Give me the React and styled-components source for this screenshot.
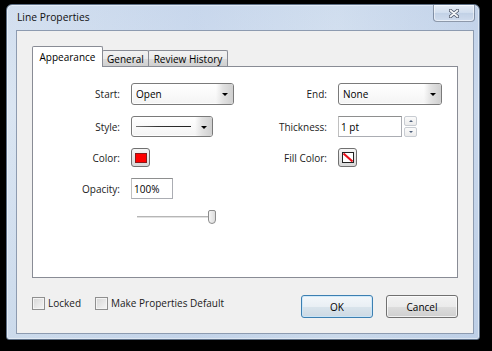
import React from 'react'
import styled, { createGlobalStyle } from 'styled-components'

const GlobalStyle = createGlobalStyle`
  html, body {
    margin: 0;
    padding: 0;
    background: #000;
  }
  body {
    font-family: "Open Sans", "Noto Sans", sans-serif;
    font-size: 10px;
    color: #1b1b1b;
  }
  * { box-sizing: border-box; }
`

const Screen = styled.div`
  width: 492px;
  height: 351px;
  background: #000;
  padding: 4px 0 0 6px;
`

const Window = styled.div`
  width: 474px;
  height: 336px;
  display: flex;
  flex-direction: column;
  border: 1px solid #5d6f86;
  border-radius: 6px 6px 3px 3px;
  background:
    linear-gradient(90deg, rgba(255,255,255,.15), rgba(190,205,235,.2) 40%, rgba(255,255,255,.1) 70%, rgba(170,190,225,.25)),
    linear-gradient(180deg, #cad9ec 0%, #d4e1f0 30%, #c3d4e8 100%);
  box-shadow: inset 0 0 0 1px rgba(255,255,255,.45);
`

const TitleBar = styled.div`
  height: 25px;
  display: flex;
  align-items: flex-start;
  padding: 0 4px 0 10px;
`

const Title = styled.span`
  margin-top: 5px;
  line-height: 14px;
  font-size: 10.3px;
  color: #101010;
`

const CloseButton = styled.div`
  margin-left: auto;
  width: 42px;
  height: 17px;
  display: flex;
  align-items: center;
  justify-content: center;
  border: 1px solid rgba(70, 84, 108, .55);
  border-top: none;
  border-radius: 0 0 4px 4px;
  background: linear-gradient(180deg, rgba(255,255,255,.55), rgba(220,230,242,.5) 50%, rgba(190,205,225,.5) 51%, rgba(215,225,240,.6));
  box-shadow: inset 0 0 0 1px rgba(255,255,255,.5);
`

const Client = styled.div`
  flex: 1;
  margin: 0 5px 5px 9px;
  display: flex;
  flex-direction: column;
  padding: 15px 15px 0 15px;
  background: #f0f0f0;
  border: 1px solid #8d9bb0;
`

const TabStrip = styled.div`
  height: 20px;
  display: flex;
  align-items: flex-end;
`

const Tab = styled.div`
  position: relative;
  width: ${p => p.$w}px;
  height: ${p => (p.$active ? 21 : 16)}px;
  margin-bottom: ${p => (p.$active ? -1 : 0)}px;
  margin-right: -1px;
  z-index: ${p => (p.$active ? 2 : 1)};
  display: flex;
  align-items: center;
  justify-content: center;
  border: 1px solid #898c95;
  border-bottom: none;
  border-radius: 2px 2px 0 0;
  background: ${p => (p.$active ? '#fff' : 'linear-gradient(180deg, #f2f2f2 0%, #ebebeb 50%, #dddddd 51%, #cfcfcf 100%)')};
  color: #000;
  white-space: nowrap;
`

const Panel = styled.div`
  height: 212px;
  background: #fff;
  border: 1px solid #898c95;
  padding-top: 16px;
  display: grid;
  grid-template-columns: 87px 105px 80px 1fr;
  grid-template-rows: 22px 21px 19px 21px 14px;
  column-gap: 11px;
  row-gap: 11px;
`

const Label = styled.label`
  justify-self: end;
  align-self: center;
  white-space: nowrap;
`

const Cell = styled.div`
  display: flex;
  align-items: center;
  gap: 2px;
`

const Combo = styled.div`
  width: ${p => p.$w}px;
  height: 100%;
  display: flex;
  align-items: stretch;
  border: 1px solid #7a7a7a;
  border-radius: 3px;
  background: linear-gradient(180deg, #ffffff, #f4f4f4);
  overflow: hidden;
  box-shadow: inset 0 0 0 1px rgba(255,255,255,.8);
`

const ComboValue = styled.div`
  flex: 1;
  display: flex;
  align-items: center;
  padding-left: 4px;
  color: #000;
`

const LineSample = styled.div`
  flex: 1;
  height: 1px;
  margin-right: 4px;
  background: linear-gradient(90deg, #777 0%, #333 40%, #222 100%);
`

const ComboArrow = styled.div`
  width: 17px;
  display: flex;
  align-items: center;
  justify-content: center;
  background: linear-gradient(90deg, rgba(255,255,255,0) 0%, #e2e2e2 40%, #cfcfcf 100%);

  &::after {
    content: '';
    border-left: 3px solid transparent;
    border-right: 3px solid transparent;
    border-top: 3px solid #000;
    margin-top: 1px;
  }
`

const TextBox = styled.div`
  width: ${p => p.$w}px;
  height: 100%;
  display: flex;
  align-items: center;
  padding-left: 2px;
  background: #fff;
  border: 1px solid #abadb3;
  border-top-color: #8e8f8f;
  border-left-color: #c0c0c0;
  color: #000;
`

const Spinner = styled.div`
  width: 13px;
  height: 100%;
  display: flex;
  flex-direction: column;
  gap: 1px;
`

const SpinButton = styled.div`
  flex: 1;
  display: flex;
  align-items: center;
  justify-content: center;
  border: 1px solid #c8ccd2;
  border-radius: 2px;
  background: linear-gradient(180deg, #fbfbfb, #ececec);

  &::after {
    content: '';
    border-left: 2px solid transparent;
    border-right: 2px solid transparent;
    ${p => (p.$down ? 'border-top: 2px solid #4f607c;' : 'border-bottom: 2px solid #4f607c;')}
  }
`

const Swatch = styled.div`
  width: 19px;
  height: 19px;
  display: flex;
  align-items: center;
  justify-content: center;
  border: 1px solid #707070;
  border-radius: 3px;
  background: linear-gradient(180deg, #f6f6f6 0%, #e6e6e6 50%, #d8d8d8 100%);
`

const Chip = styled.div`
  width: 12px;
  height: 10px;
  background: ${p => p.$color};
  border: 1px solid #8a1a1a;
`

const Slider = styled.div`
  grid-column: 2;
  position: relative;
  width: 79px;
  margin-left: 6px;
  display: flex;
  align-items: center;
`

const Track = styled.div`
  width: 75px;
  height: 2px;
  background: #e1e1e1;
  border-top: 1px solid #b6b6b6;
`

const Thumb = styled.div`
  position: absolute;
  right: 0;
  top: 0;
  width: 8px;
  height: 14px;
  border: 1px solid #8c8c8c;
  border-radius: 2px 2px 4px 4px;
  background: linear-gradient(90deg, #f4f4f4, #dcdcdc);
`

const Footer = styled.div`
  flex: 1;
  display: flex;
  align-items: flex-start;
  padding-top: 17px;
`

const Check = styled.div`
  display: flex;
  align-items: center;
  gap: 3px;
  margin-top: 2px;
  margin-right: 14px;
  line-height: 11px;
  white-space: nowrap;

  &::before {
    content: '';
    width: 11px;
    height: 11px;
    border: 1px solid #8f8f8f;
    background: linear-gradient(135deg, #d6d6d6, #f5f5f5);
    box-shadow: inset 0 0 0 1px #f4f4f4;
  }
`

const Buttons = styled.div`
  margin-left: auto;
  display: flex;
  gap: 13px;
`

const Button = styled.div`
  width: 72px;
  height: 23px;
  display: flex;
  align-items: center;
  justify-content: center;
  border: 1px solid ${p => (p.$default ? '#3c7fb1' : '#707070')};
  border-radius: 3px;
  color: #000;
  background: ${p => (p.$default
    ? 'linear-gradient(180deg, #f3f7fa 0%, #e9eff4 50%, #d9e4ec 51%, #cdd9e3 100%)'
    : 'linear-gradient(180deg, #f2f2f2 0%, #ebebeb 50%, #dddddd 51%, #cfcfcf 100%)')};
  box-shadow: inset 0 0 0 1px ${p => (p.$default ? 'rgba(200,230,250,.8)' : 'rgba(255,255,255,.7)')};
`

const CloseGlyph = () => (
  <svg width="10" height="9" viewBox="0 0 10 9">
    <path d="M1.5 1.5 L8.5 7.5 M8.5 1.5 L1.5 7.5" stroke="#4a5466" strokeWidth="3.4" strokeLinecap="round" />
    <path d="M1.5 1.5 L8.5 7.5 M8.5 1.5 L1.5 7.5" stroke="#f4f6f9" strokeWidth="1.8" strokeLinecap="round" />
  </svg>
)

const NoFill = () => (
  <svg width="12" height="11" viewBox="0 0 12 11">
    <rect x="0.5" y="0.5" width="11" height="10" fill="#fff" stroke="#222" />
    <path d="M1.5 1.5 L10.5 9.5" stroke="#e8101a" strokeWidth="2.2" />
  </svg>
)

const Combobox = ({ w, children }) => (
  <Combo $w={w}>
    {children}
    <ComboArrow />
  </Combo>
)

const App = () => (
  <>
    <GlobalStyle />
    <Screen>
      <Window>
        <TitleBar>
          <Title>Line Properties</Title>
          <CloseButton><CloseGlyph /></CloseButton>
        </TitleBar>
        <Client>
          <TabStrip>
            <Tab $active $w={71}>Appearance</Tab>
            <Tab $w={47}>General</Tab>
            <Tab $w={80}>Review History</Tab>
          </TabStrip>
          <Panel>
            <Label>Start:</Label>
            <Cell>
              <Combobox w={103}><ComboValue>Open</ComboValue></Combobox>
            </Cell>
            <Label>End:</Label>
            <Cell>
              <Combobox w={104}><ComboValue>None</ComboValue></Combobox>
            </Cell>

            <Label>Style:</Label>
            <Cell>
              <Combobox w={82}>
                <ComboValue><LineSample /></ComboValue>
              </Combobox>
            </Cell>
            <Label>Thickness:</Label>
            <Cell>
              <TextBox $w={64}>1 pt</TextBox>
              <Spinner>
                <SpinButton />
                <SpinButton $down />
              </Spinner>
            </Cell>

            <Label>Color:</Label>
            <Cell>
              <Swatch><Chip $color="#ff0000" /></Swatch>
            </Cell>
            <Label>Fill Color:</Label>
            <Cell>
              <Swatch><NoFill /></Swatch>
            </Cell>

            <Label>Opacity:</Label>
            <Cell>
              <TextBox $w={42}>100%</TextBox>
            </Cell>
            <div />
            <div />

            <Slider>
              <Track />
              <Thumb />
            </Slider>
          </Panel>
          <Footer>
            <Check>Locked</Check>
            <Check>Make Properties Default</Check>
            <Buttons>
              <Button $default>OK</Button>
              <Button>Cancel</Button>
            </Buttons>
          </Footer>
        </Client>
      </Window>
    </Screen>
  </>
)

export default App
